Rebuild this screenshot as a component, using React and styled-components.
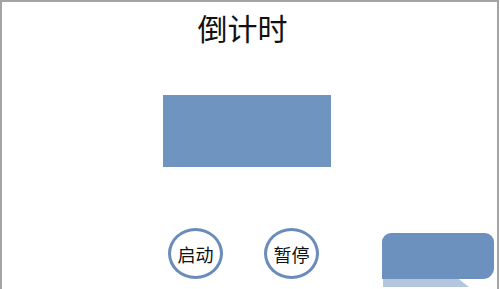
import React from 'react';
import styled, { createGlobalStyle } from 'styled-components';

const GlobalStyle = createGlobalStyle`
  html, body {
    margin: 0;
    padding: 0;
    background: #fff;
  }
  body {
    font-family: "Noto Sans CJK SC", "Noto Sans", sans-serif;
  }
`;

const Frame = styled.div`
  box-sizing: border-box;
  width: 499px;
  height: 289px;
  border: 2px solid #a4a4a4;
  border-bottom: none;
  display: flex;
  flex-direction: column;
  overflow: hidden;
`;

const Title = styled.h1`
  margin: 0;
  padding: 7px 14px 0 0;
  text-align: center;
  font-size: 30px;
  line-height: 36px;
  font-weight: 400;
  color: #111;
`;

const Display = styled.div`
  margin: 50px 0 0 161px;
  width: 168px;
  height: 72px;
  background: #7094c0;
`;

const Controls = styled.div`
  display: flex;
  align-items: flex-start;
  margin: 61px 0 0 166px;
`;

const RoundButton = styled.button`
  box-sizing: border-box;
  width: 55px;
  height: 51px;
  margin-right: ${({ $gap }) => $gap}px;
  padding: 0;
  border: 3px solid #6a8cba;
  border-radius: 50%;
  background: #fff;
  font-family: inherit;
  font-size: 18px;
  font-weight: 400;
  color: #111;
  display: flex;
  align-items: center;
  justify-content: center;
`;

const Callout = styled.div`
  display: flex;
  flex-direction: column;
  margin-top: 5px;
`;

const CalloutBody = styled.div`
  width: 112px;
  height: 46px;
  background: #6d91be;
  border-radius: 9px 9px 11px 0;
`;

const CalloutTail = styled.div`
  width: 86px;
  height: 8px;
  margin-left: 1px;
  background: #b4c6dd;
  clip-path: polygon(0 0, 88% 0, 100% 100%, 0 100%);
`;

export default function App() {
  return (
    <>
      <GlobalStyle />
      <Frame>
        <Title>倒计时</Title>
        <Display />
        <Controls>
          <RoundButton $gap={41}>启动</RoundButton>
          <RoundButton $gap={63}>暂停</RoundButton>
          <Callout>
            <CalloutBody />
            <CalloutTail />
          </Callout>
        </Controls>
      </Frame>
    </>
  );
}
